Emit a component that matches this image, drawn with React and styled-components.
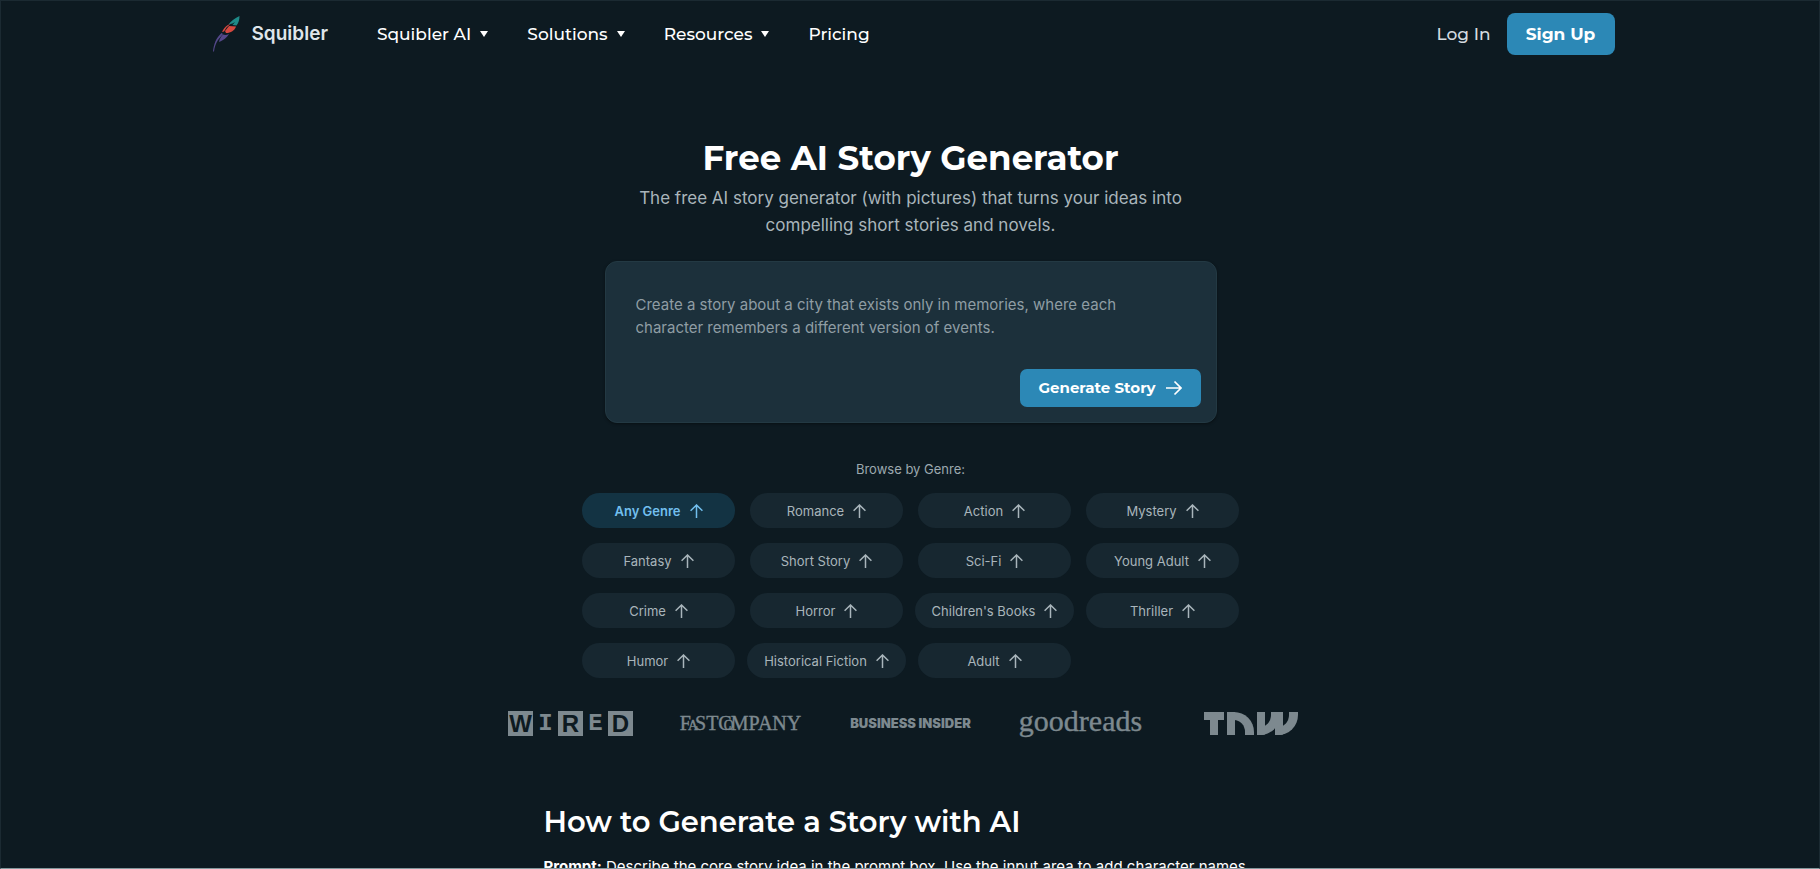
import React from "react";
import styled, { createGlobalStyle } from "styled-components";

const display = `Montserrat, Inter, "Open Sans", sans-serif`;
const body = `Inter, "Noto Sans", sans-serif`;

const GlobalStyle = createGlobalStyle`
  *, *::before, *::after { box-sizing: border-box; }
  body { margin: 0; background: #0d1a21; color: #fff; font-family: ${body}; }
  button, textarea { font: inherit; color: inherit; }
  a { color: inherit; text-decoration: none; }
  h1, h2, p { margin: 0; }
`;

const Page = styled.div`
  height: 100vh;
  overflow: hidden;
  padding-left: 1px;
  border: 1px solid #1b2a32;
  border-bottom-color: #82979c;
  background: #0d1a21;
`;

const Header = styled.header`
  display: flex;
  align-items: center;
  max-width: 1408px;
  height: 65px;
  margin: 0 auto;
  padding-left: 6px;
`;

const Brand = styled.a`
  display: flex;
  align-items: center;
  gap: 12px;
  font-size: 19px;
  font-weight: 600;
  line-height: 24px;
  color: #dfe5ea;
`;

const Nav = styled.nav`
  display: flex;
  align-items: center;
  gap: 39px;
  margin-left: 49px;
  font-family: ${display};
  font-size: 17px;
  font-weight: 500;
  line-height: 24px;
`;

const NavButton = styled.button`
  display: flex;
  align-items: center;
  gap: 9px;
  padding: 0;
  border: 0;
  background: none;
  cursor: pointer;
`;

const Account = styled.div`
  display: flex;
  align-items: center;
  gap: 16px;
  margin-left: auto;
  font-family: ${display};
  font-size: 17px;
  line-height: 24px;
`;

const LogIn = styled.a`
  color: #d5dce0;
  font-weight: 500;
`;

const SignUp = styled.a`
  display: grid;
  place-items: center;
  width: 108px;
  height: 42px;
  border-radius: 8px;
  background: #2c88b6;
  font-weight: 700;
`;

const Hero = styled.section`
  display: flex;
  flex-direction: column;
  align-items: center;
  padding-top: 70px;
`;

const Title = styled.h1`
  font-family: ${display};
  font-size: 34px;
  font-weight: 700;
  line-height: 44px;
`;

const Lead = styled.p`
  max-width: 570px;
  margin-top: 5px;
  color: #a9b5bb;
  font-size: 17px;
  line-height: 27px;
  text-align: center;
`;

const PromptCard = styled.form`
  display: flex;
  flex-direction: column;
  width: 100%;
  max-width: 612px;
  height: 162px;
  margin-top: 22px;
  padding: 31px 15px 15px 30px;
  border: 1px solid #233943;
  border-radius: 12px;
  background: #1c303b;
  box-shadow: 0 1px 3px rgba(0, 0, 0, 0.4);
`;

const PromptInput = styled.textarea`
  flex: 1;
  width: 100%;
  padding: 0 60px 0 0;
  border: 0;
  outline: 0;
  resize: none;
  overflow: hidden;
  background: none;
  font-size: 15px;
  line-height: 23px;
  &::placeholder { color: #8f9da4; opacity: 1; }
`;

const Generate = styled.button`
  display: flex;
  align-items: center;
  justify-content: center;
  gap: 9px;
  align-self: flex-end;
  width: 181px;
  height: 38px;
  padding: 0;
  border: 0;
  border-radius: 7px;
  background: #2c88b6;
  font-family: ${display};
  font-size: 15px;
  font-weight: 700;
  line-height: 18px;
  cursor: pointer;
`;

const GenreLabel = styled.p`
  margin-top: 36px;
  color: #9ca9af;
  font-size: 13px;
  line-height: 20px;
`;

const Genres = styled.div`
  display: grid;
  grid-template-columns: repeat(4, 153px);
  gap: 15px;
  margin-top: 14px;
`;

const Genre = styled.button`
  display: flex;
  align-items: center;
  justify-content: center;
  justify-self: center;
  gap: 9px;
  min-width: 100%;
  height: 35px;
  padding: 0 17px;
  border: 0;
  border-radius: 18px;
  background: ${(p) => (p.$active ? "#133343" : "#172730")};
  color: ${(p) => (p.$active ? "#72bfee" : "#a9b5bb")};
  font-size: 13px;
  font-weight: ${(p) => (p.$active ? 600 : 400)};
  white-space: nowrap;
  cursor: pointer;
`;

const Press = styled.div`
  display: grid;
  grid-template-columns: repeat(5, 125px);
  gap: 45px;
  place-items: center;
  height: 40px;
  margin-top: 25px;
  color: #7d898f;
  white-space: nowrap;
`;

const Wired = styled.div`
  display: grid;
  grid-template-columns: repeat(5, 25px);
  text-align: center;
  font-size: 24px;
  font-weight: 700;
  line-height: 25px;
`;

const WiredTile = styled.span`
  height: 25px;
  font-family: ${(p) => (p.$filled ? `"Liberation Sans", sans-serif` : `"Liberation Mono", monospace`)};
  background: ${(p) => (p.$filled ? "#7d898f" : "none")};
  color: ${(p) => (p.$filled ? "#0d1a21" : "#7d898f")};
`;

const FastCompany = styled.span`
  font-family: "Liberation Serif", serif;
  font-size: 20px;
  -webkit-text-stroke: 0.4px currentColor;
`;

const TuckedLetter = styled.small`
  margin: 0 -3px 0 ${(p) => (p.$nested ? "-8px" : "-3px")};
  font-size: 14px;
`;

const BusinessInsider = styled.span`
  font-family: Inter, sans-serif;
  font-size: 13px;
  font-weight: 900;
`;

const Goodreads = styled.span`
  font-family: "Liberation Serif", serif;
  font-size: 30px;
  line-height: 34px;
  padding-bottom: 4px;
  -webkit-text-stroke: 0.4px currentColor;
`;

const Tnw = styled.div`
  display: flex;
  gap: 3px;
  height: 23px;
`;

const TnwTee = styled.i`
  width: 20px;
  border-top: 8px solid currentColor;
  &::after {
    content: "";
    display: block;
    width: 8px;
    height: 15px;
    margin: 0 auto;
    background: currentColor;
  }
`;

const TnwArch = styled.i`
  width: 27px;
  border: solid currentColor;
  border-width: 8px 9px 0 8px;
  border-top-right-radius: 20px;
`;

const TnwBowl = styled.i`
  width: 23px;
  margin-right: ${(p) => (p.$joined ? "-8px" : "0")};
  border: solid currentColor;
  border-width: 0 9px 8px 8px;
  border-bottom-right-radius: 20px;
`;

const Guide = styled.section`
  width: 100%;
  max-width: 734px;
  margin: 59px auto 0;
`;

const GuideTitle = styled.h2`
  font-family: ${display};
  font-size: 29px;
  font-weight: 600;
  line-height: 40px;
`;

const GuideText = styled.p`
  margin-top: 11px;
  font-size: 15px;
  line-height: 28px;
`;

const Feather = () => (
  <svg width="27" height="36" viewBox="0 0 27 36" aria-hidden="true">
    <path d="M26.500 0C22 2 18 5 15.500 8.500l4-1L22 6l-2.500 3 4 .5C25.500 7 26.500 4 26.500 0Z" fill="#1f8a88" />
    <path d="M14.800 9C12 11 10 13.500 9 16l2-.5 2.500-4 4-3.500Z" fill="#d5483f" />
    <path d="M12 15l4-5 7 .5c-1.500 4-5 6.500-10 6.500Z" fill="#d5483f" />
    <path d="M8.500 17C3 22 .8 28 0 35.500h1C1.500 31 3 27 5 24l5-6Z" fill="#54488a" />
    <path d="M10 18.500c2 .8 4 .4 6-.5-2 3.500-5.500 6.500-10 8 .5-3 2-5.500 4-7.500Z" fill="#54488a" />
  </svg>
);

const Caret = () => (
  <svg width="8" height="6" viewBox="0 0 8 6" aria-hidden="true">
    <path d="M0 0h8L4 6Z" fill="currentColor" />
  </svg>
);

const ArrowRight = () => (
  <svg width="17" height="16" viewBox="0 0 17 16" fill="none" stroke="currentColor" strokeWidth="1.7" aria-hidden="true">
    <path d="M1 8h15M9.500 1.500 16 8l-6.500 6.500" />
  </svg>
);

const ArrowUp = () => (
  <svg width="13" height="14" viewBox="0 0 13 14" fill="none" stroke="currentColor" strokeWidth="1.500" aria-hidden="true">
    <path d="M6.500 14V1M.6 6.800 6.500 1l5.900 5.800" />
  </svg>
);

const menus = ["Squibler AI", "Solutions", "Resources"];
const genres = [
  "Any Genre", "Romance", "Action", "Mystery",
  "Fantasy", "Short Story", "Sci-Fi", "Young Adult",
  "Crime", "Horror", "Children's Books", "Thriller",
  "Humor", "Historical Fiction", "Adult",
];

export default function App() {
  return (
    <Page>
      <GlobalStyle />
      <Header>
        <Brand href="#"><Feather />Squibler</Brand>
        <Nav>
          {menus.map((m) => (
            <NavButton key={m} type="button">{m}<Caret /></NavButton>
          ))}
          <a href="#pricing">Pricing</a>
        </Nav>
        <Account>
          <LogIn href="#login">Log In</LogIn>
          <SignUp href="#signup">Sign Up</SignUp>
        </Account>
      </Header>
      <main>
        <Hero>
          <Title>Free AI Story Generator</Title>
          <Lead>
            The free AI story generator (with pictures) that turns your ideas into compelling short stories and novels.
          </Lead>
          <PromptCard onSubmit={(e) => e.preventDefault()}>
            <PromptInput
              aria-label="Story prompt"
              placeholder="Create a story about a city that exists only in memories, where each character remembers a different version of events."
            />
            <Generate type="submit">Generate Story<ArrowRight /></Generate>
          </PromptCard>
          <GenreLabel>Browse by Genre:</GenreLabel>
          <Genres>
            {genres.map((g, i) => (
              <Genre key={g} type="button" $active={i === 0}>{g}<ArrowUp /></Genre>
            ))}
          </Genres>
          <Press>
            <Wired>
              {[..."WIRED"].map((c, i) => (
                <WiredTile key={c} $filled={i % 2 === 0}>{c}</WiredTile>
              ))}
            </Wired>
            <FastCompany>
              F<TuckedLetter>A</TuckedLetter>STC<TuckedLetter $nested>O</TuckedLetter>MPANY
            </FastCompany>
            <BusinessInsider>BUSINESS INSIDER</BusinessInsider>
            <Goodreads>goodreads</Goodreads>
            <Tnw role="img" aria-label="TNW">
              <TnwTee />
              <TnwArch />
              <TnwBowl $joined />
              <TnwBowl />
            </Tnw>
          </Press>
        </Hero>
        <Guide>
          <GuideTitle>How to Generate a Story with AI</GuideTitle>
          <GuideText>
            <strong>Prompt:</strong> Describe the core story idea in the prompt box. Use the input area to add character names,
          </GuideText>
        </Guide>
      </main>
    </Page>
  );
}
